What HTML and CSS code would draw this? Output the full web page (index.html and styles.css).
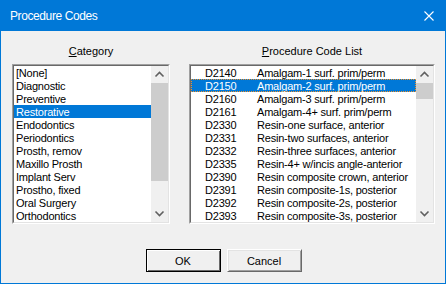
FILE: index.html
```html
<!DOCTYPE html>
<html lang="en">
<head>
    <meta charset="UTF-8">
    <title>Procedure Codes</title>
    <link rel="stylesheet" href="styles.css">
</head>
<body>
    <div class="window">
        <div class="titlebar">
            <span class="title">Procedure Codes</span>
            <svg class="close" width="10" height="10" viewBox="0 0 10 10">
                <path d="M0.5 0.5 L9.5 9.5 M9.5 0.5 L0.5 9.5" stroke="#fff" stroke-width="1.1" fill="none"/>
            </svg>
        </div>

        <div class="client">
            <div class="panes">
                <div class="pane pane-category">
                    <div class="pane-label"><u>C</u>ategory</div>
                    <div class="listbox">
                        <div class="well">
                            <ul class="items">
                                <li>[None]</li>
                                <li>Diagnostic</li>
                                <li>Preventive</li>
                                <li class="selected">Restorative</li>
                                <li>Endodontics</li>
                                <li>Periodontics</li>
                                <li>Prosth, remov</li>
                                <li>Maxillo Prosth</li>
                                <li>Implant Serv</li>
                                <li>Prostho, fixed</li>
                                <li>Oral Surgery</li>
                                <li>Orthodontics</li>
                            </ul>
                            <div class="scrollbar">
                                <div class="arrow">
                                    <svg width="17" height="17" viewBox="0 0 17 17"><polyline points="4.5,10.5 8.5,6.5 12.5,10.5" fill="none" stroke="#606060" stroke-width="1.6"/></svg>
                                </div>
                                <div class="track"><div class="thumb thumb-long"></div></div>
                                <div class="arrow">
                                    <svg width="17" height="17" viewBox="0 0 17 17"><polyline points="4.5,6.5 8.5,10.5 12.5,6.5" fill="none" stroke="#606060" stroke-width="1.6"/></svg>
                                </div>
                            </div>
                        </div>
                    </div>
                </div>

                <div class="pane pane-codes">
                    <div class="pane-label"><u>P</u>rocedure Code List</div>
                    <div class="listbox">
                        <div class="well">
                            <ul class="items codes">
                                <li><span class="code">D2140</span><span>Amalgam-1 surf. prim/perm</span></li>
                                <li class="selected focused"><span class="code">D2150</span><span>Amalgam-2 surf. prim/perm</span></li>
                                <li><span class="code">D2160</span><span>Amalgam-3 surf. prim/perm</span></li>
                                <li><span class="code">D2161</span><span>Amalgam-4+ surf. prim/perm</span></li>
                                <li><span class="code">D2330</span><span>Resin-one surface, anterior</span></li>
                                <li><span class="code">D2331</span><span>Resin-two surfaces, anterior</span></li>
                                <li><span class="code">D2332</span><span>Resin-three surfaces, anterior</span></li>
                                <li><span class="code">D2335</span><span>Resin-4+ w/incis angle-anterior</span></li>
                                <li><span class="code">D2390</span><span>Resin composite crown, anterior</span></li>
                                <li><span class="code">D2391</span><span>Resin composite-1s, posterior</span></li>
                                <li><span class="code">D2392</span><span>Resin composite-2s, posterior</span></li>
                                <li><span class="code">D2393</span><span>Resin composite-3s, posterior</span></li>
                            </ul>
                            <div class="scrollbar">
                                <div class="arrow">
                                    <svg width="17" height="17" viewBox="0 0 17 17"><polyline points="4.5,10.5 8.5,6.5 12.5,10.5" fill="none" stroke="#606060" stroke-width="1.6"/></svg>
                                </div>
                                <div class="track"><div class="thumb thumb-short"></div></div>
                                <div class="arrow">
                                    <svg width="17" height="17" viewBox="0 0 17 17"><polyline points="4.5,6.5 8.5,10.5 12.5,6.5" fill="none" stroke="#606060" stroke-width="1.6"/></svg>
                                </div>
                            </div>
                        </div>
                    </div>
                </div>
            </div>

            <div class="buttons">
                <button class="btn btn-default">OK</button>
                <button class="btn">Cancel</button>
            </div>
        </div>
    </div>
</body>
</html>
```

FILE: styles.css
```css
* {
    box-sizing: border-box;
}

body {
    margin: 0;
    font-family: "Liberation Sans", Arial, sans-serif;
    font-size: 11px;
    color: #000;
}

.window {
    width: 446px;
    height: 284px;
    background: #f0f0f0;
    border: 1px solid #0078d7;
    border-top: none;
    display: flex;
    flex-direction: column;
}

.titlebar {
    height: 31px;
    margin: 0 -1px;
    padding: 0 12px 0 10px;
    background: #0078d7;
    color: #fff;
    display: flex;
    align-items: center;
    justify-content: space-between;
}

.title {
    font-size: 12px;
    letter-spacing: -0.4px;
}

.close {
    display: block;
}

.client {
    padding: 14px 10px 0 11px;
}

.panes {
    display: flex;
    gap: 19px;
}

.pane-category {
    width: 158px;
}

.pane-codes {
    width: 246px;
}

.pane-label {
    text-align: center;
    line-height: 13px;
    height: 13px;
    margin-bottom: 6px;
}

/* sunken 3d edge, two lines */
.listbox {
    height: 160px;
    border: 1px solid;
    border-color: #a0a0a0 #fff #fff #a0a0a0;
}

.well {
    height: 100%;
    border: 1px solid;
    border-color: #696969 #e3e3e3 #e3e3e3 #696969;
    background: #fff;
    display: flex;
}

.items {
    list-style: none;
    margin: 0;
    padding: 0;
    flex: 1;
    overflow: hidden;
}

.items li {
    height: 13px;
    line-height: 14px;
    padding-left: 2px;
    white-space: nowrap;
    letter-spacing: -0.2px;
}

.items li.selected {
    background: #0078d7;
    color: #fff;
}

.items li.focused {
    outline: 1px dotted #f0922b;
    outline-offset: -1px;
}

.codes li {
    display: flex;
    padding-left: 14px;
}

.codes .code {
    width: 52px;
}

.scrollbar {
    width: 17px;
    background: #f0f0f0;
    display: flex;
    flex-direction: column;
}

.arrow {
    height: 17px;
}

.arrow svg {
    display: block;
}

.track {
    flex: 1;
}

.thumb {
    background: #cdcdcd;
}

.thumb-long {
    height: 98px;
}

.thumb-short {
    height: 16px;
}

.buttons {
    display: flex;
    justify-content: center;
    gap: 6px;
    margin-top: 25px;
}

.btn {
    width: 75px;
    height: 23px;
    padding: 0;
    font-family: inherit;
    font-size: 11px;
    color: #000;
    background: #f0f0f0;
    border: 1px solid;
    border-color: #fff #696969 #696969 #fff;
    box-shadow: inset 1px 1px 0 #e3e3e3, inset -1px -1px 0 #a0a0a0;
}

.btn-default {
    border-color: #000;
    box-shadow: inset 1px 1px 0 #fff, inset -1px -1px 0 #696969;
}
```
